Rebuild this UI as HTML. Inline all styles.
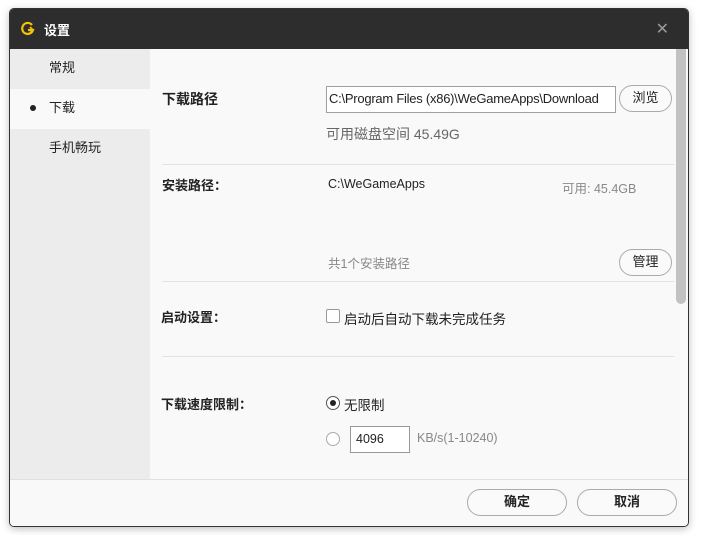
<!DOCTYPE html>
<html><head><meta charset="utf-8"><style>
*{margin:0;padding:0;box-sizing:border-box}
body{width:704px;height:535px;background:#fff;font-family:"Liberation Sans","Noto Sans CJK SC",sans-serif;font-size:13px;color:#222;position:relative;overflow:hidden}
.win{position:absolute;left:9px;top:8px;width:680px;height:519px;border:1px solid #333;border-radius:5px;overflow:hidden;background:#f9f9f9;box-shadow:0 2px 8px rgba(0,0,0,.25)}
.title{position:absolute;left:0;top:0;width:100%;height:40px;background:#2d2d2d;color:#fff}
.title .t{position:absolute;left:34px;top:11px;font-size:13px;font-weight:bold}
.title .x{position:absolute;right:19px;top:10px;color:#999;font-size:16px}
.side{position:absolute;left:0;top:40px;width:140px;height:430px;background:#ececec}
.side div{height:40px;line-height:38px;padding-left:39px}
.side .a{background:#f9f9f9;position:relative}
.side .a:before{content:"";position:absolute;left:20px;top:16px;width:6px;height:6px;border-radius:50%;background:#222}
.abs{position:absolute;white-space:nowrap}
.b{font-weight:bold}
.hr{position:absolute;left:152px;width:512px;height:1px;background:#e2e2e2}
.btn{position:absolute;border:1px solid #aaa;border-radius:14px;background:#fafafa;text-align:center}
.sb{position:absolute;left:666px;top:40px;width:10px;height:255px;background:#c2c2c2;border-radius:0 0 5px 5px}
.foot{position:absolute;left:0;top:470px;width:100%;height:49px;border-top:1px solid #e0e0e0;background:#f9f9f9}
</style></head><body>
<div class="win">
<div class="title"><svg class="abs" style="left:11px;top:12px" width="14" height="16" viewBox="0 0 14 16"><path d="M11 4A5.5 5.5 0 1 0 12 9H7" fill="none" stroke="#f5c400" stroke-width="2.2"/><path d="M9 6l3 3-3 3" fill="none" stroke="#f5c400" stroke-width="1.6"/></svg><span class="t">设置</span><span class="x">✕</span></div>
<div class="side"><div>常规</div><div class="a">下载</div><div>手机畅玩</div></div>
<div class="sb"></div>
<div class="abs b" style="left:152px;top:80px;font-size:14px">下载路径</div>
<div class="abs" style="left:316px;top:77px;width:290px;height:27px;border:1px solid #a0a0a0;background:#fff;padding:4px 0 0 2px;font-size:13px;letter-spacing:-0.25px;overflow:hidden">C:\Program Files (x86)\WeGameApps\Download</div>
<div class="btn" style="left:609px;top:76px;width:53px;height:27px;line-height:24px">浏览</div>
<div class="abs" style="left:316px;top:115px;color:#666;font-size:14px">可用磁盘空间 45.49G</div>
<div class="hr" style="top:155px"></div>
<div class="abs b" style="left:152px;top:166px">安装路径：</div>
<div class="abs" style="left:318px;top:168px;font-size:12.5px">C:\WeGameApps</div>
<div class="abs" style="left:552px;top:169px;color:#888;font-size:12.5px">可用: 45.4GB</div>
<div class="abs" style="left:318px;top:244px;color:#888;font-size:12.5px">共1个安装路径</div>
<div class="btn" style="left:609px;top:240px;width:53px;height:27px;line-height:24px">管理</div>
<div class="hr" style="top:272px"></div>
<div class="abs b" style="left:151px;top:298px">启动设置：</div>
<div class="abs" style="left:316px;top:300px;width:14px;height:14px;border:1px solid #999;background:#fff;border-radius:2px"></div>
<div class="abs" style="left:334px;top:299px;font-size:13.5px">启动后自动下载未完成任务</div>
<div class="hr" style="top:347px"></div>
<div class="abs b" style="left:151px;top:385px">下载速度限制：</div>
<div class="abs" style="left:316px;top:387px;width:14px;height:14px;border:1px solid #555;border-radius:50%;background:#fff"><div style="margin:3px;width:6px;height:6px;border-radius:50%;background:#222"></div></div>
<div class="abs" style="left:334px;top:385px;font-size:13.5px">无限制</div>
<div class="abs" style="left:316px;top:423px;width:14px;height:14px;border:1px solid #aaa;border-radius:50%;background:#fff"></div>
<div class="abs" style="left:340px;top:417px;width:60px;height:27px;border:1px solid #999;background:#fff;padding:5px 0 0 5px;font-size:12.5px">4096</div>
<div class="abs" style="left:407px;top:422px;color:#888;font-size:12.5px">KB/s(1-10240)</div>
<div class="foot"></div>
<div class="btn b" style="left:457px;top:480px;width:100px;height:27px;line-height:24px">确定</div>
<div class="btn b" style="left:567px;top:480px;width:100px;height:27px;line-height:24px">取消</div>
</div>
</body></html>
